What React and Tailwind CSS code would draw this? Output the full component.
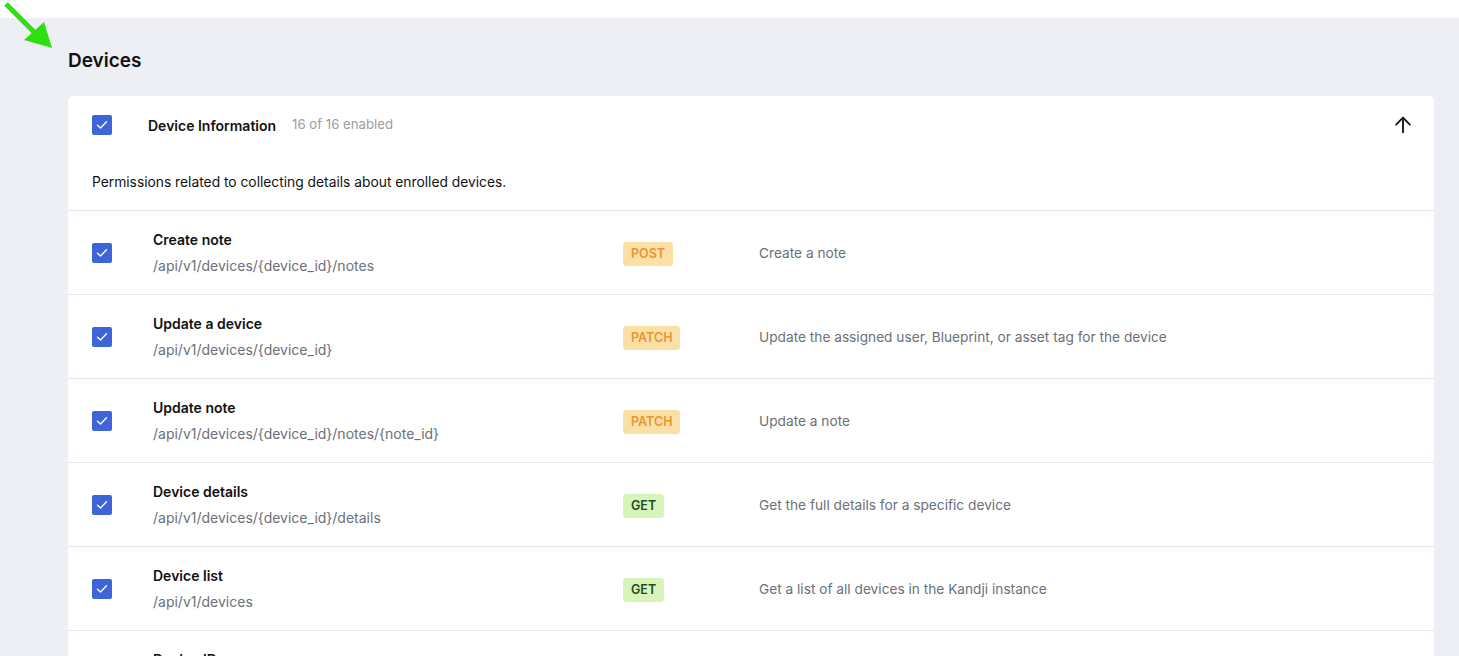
import React from "react";

const rows = [
  { title: "Create note", path: "/api/v1/devices/{device_id}/notes", method: "POST", desc: "Create a note" },
  { title: "Update a device", path: "/api/v1/devices/{device_id}", method: "PATCH", desc: "Update the assigned user, Blueprint, or asset tag for the device" },
  { title: "Update note", path: "/api/v1/devices/{device_id}/notes/{note_id}", method: "PATCH", desc: "Update a note" },
  { title: "Device details", path: "/api/v1/devices/{device_id}/details", method: "GET", desc: "Get the full details for a specific device" },
  { title: "Device list", path: "/api/v1/devices", method: "GET", desc: "Get a list of all devices in the Kandji instance" },
  { title: "Device ID", path: "/api/v1/devices/{device_id}", method: "GET", desc: "Get information about a specific device" },
];

function Check() {
  return (
    <div className="w-5 h-5 bg-[#3d65d8] rounded-[2px] flex items-center justify-center shrink-0">
      <svg width="12" height="10" viewBox="0 0 12 10" fill="none">
        <path d="M1.5 5.2 L4.5 8 L10.5 1.8" stroke="white" strokeWidth="1.4" strokeLinecap="round" strokeLinejoin="round" />
      </svg>
    </div>
  );
}

function Badge({ method }) {
  const cls =
    method === "GET"
      ? "bg-[#d8f5b9] text-[#1f4d23]"
      : "bg-[#fbe0a6] text-[#ea9530]";
  return (
    <span className={`inline-block px-[8px] h-6 leading-6 rounded-[3px] text-[12.5px] font-semibold ${cls}`}>
      {method}
    </span>
  );
}

export default function App() {
  return (
    <div className="relative h-[656px] overflow-hidden bg-white font-['Inter',sans-serif] text-[#111]">
      <div className="h-[18px] bg-white" />
      <div className="bg-[#eeeff4] pl-[68px] pr-[25px] pt-[31px] h-full">
        <h1 className="text-[19px] font-semibold leading-6 text-[#111] mb-[23px]">Devices</h1>
        <div className="bg-white rounded-[5px]">
          <div className="flex items-center pl-6 pr-[20px] pt-[18px]">
            <Check />
            <span className="ml-9 text-[14px] font-semibold">Device Information</span>
            <span className="ml-4 text-[13.2px] text-[#9a9ca3]">16 of 16 enabled</span>
            <svg className="ml-auto" width="22" height="22" viewBox="0 0 24 24" fill="none" stroke="#111" strokeWidth="2" strokeLinecap="round" strokeLinejoin="round">
              <path d="M12 20V4" />
              <path d="M4.5 11.5 12 4l7.5 7.5" />
            </svg>
          </div>
          <p className="pl-6 pt-[38px] pb-[20px] text-[13.8px] leading-4 text-[#111]">
            Permissions related to collecting details about enrolled devices.
          </p>
          {rows.map((r) => (
            <div key={r.title} className="flex items-center h-[84px] border-t border-[#e6e7ee] pl-6">
              <Check />
              <div className="ml-[41px] w-[470px] flex flex-col">
                <span className="text-[14px] font-semibold leading-4">{r.title}</span>
                <span className="mt-[10px] text-[14px] leading-4 text-[#6b6f78]">{r.path}</span>
              </div>
              <div className="w-[136px]">
                <Badge method={r.method} />
              </div>
              <span className="mt-[2px] text-[13.7px] text-[#6b6f78]">{r.desc}</span>
            </div>
          ))}
        </div>
      </div>
      <svg className="absolute left-0 top-0" width="60" height="56" viewBox="0 0 60 56">
        <path d="M6 4 L38 36" stroke="#2ee010" strokeWidth="5" strokeLinecap="butt" />
        <polygon points="52,48 24,40 44,22" fill="#2ee010" />
      </svg>
    </div>
  );
}
